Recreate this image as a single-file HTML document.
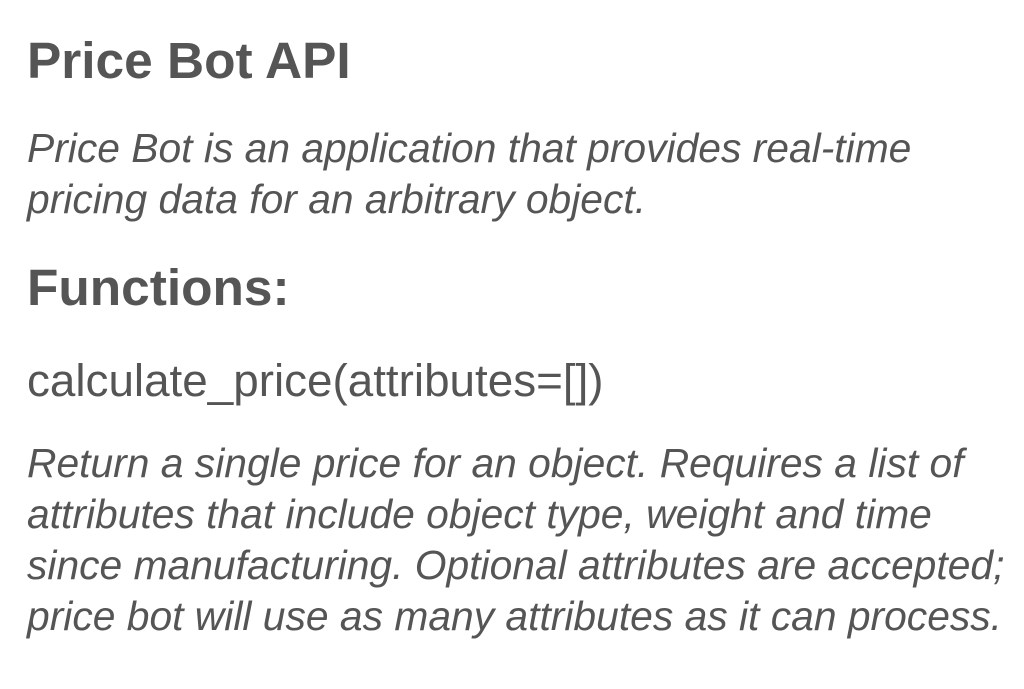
<!DOCTYPE html>
<html><head><meta charset="utf-8"><style>
html,body{margin:0;padding:0;width:1024px;height:689px;background:#fff;overflow:hidden}
body{font-family:"Liberation Sans",Arial,sans-serif;color:#555}
div{position:absolute;left:27px;white-space:nowrap}
.h{font-weight:bold;font-size:51.4px;line-height:60px}
.p{font-style:italic;font-size:40.8px;line-height:51px}
.c{font-size:45.8px;line-height:50px}
</style></head><body>
<div class="h" style="top:30px">Price Bot API</div>
<div class="p" style="top:123px">Price Bot is an application that provides real-time<br>pricing data for an arbitrary object.</div>
<div class="h" style="top:257px">Functions:</div>
<div class="c" style="top:356px">calculate_price(attributes=[])</div>
<div class="p" style="top:438px">Return a single price for an object. Requires a list of<br>attributes that include object type, weight and time<br>since manufacturing. Optional attributes are accepted;<br>price bot will use as many attributes as it can process.</div>
</body></html>
